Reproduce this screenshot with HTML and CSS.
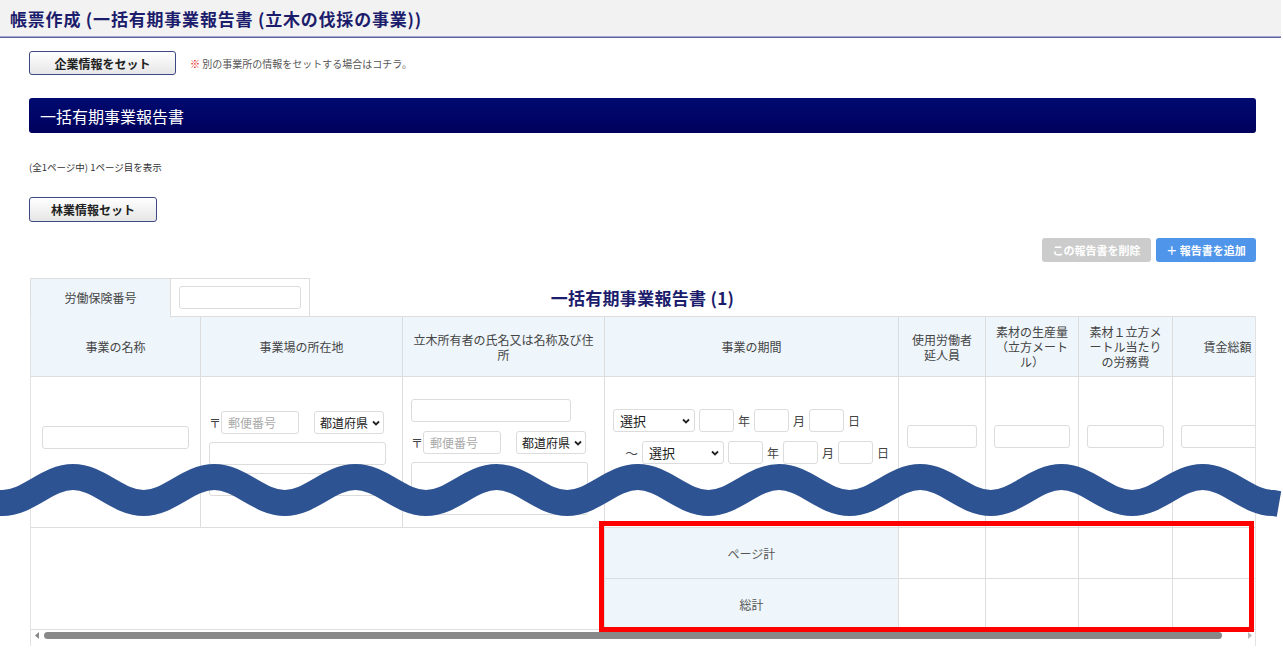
FILE: index.html
```html
<!DOCTYPE html>
<html lang="ja">
<head>
    <meta charset="UTF-8">
    <title>帳票作成 (一括有期事業報告書 (立木の伐採の事業))</title>
    <link rel="stylesheet" href="styles.css">
</head>
<body>
    <!-- Page heading -->
    <div class="page-head">
        <h1>帳票作成 (一括有期事業報告書 (立木の伐採の事業))</h1>
    </div>

    <div class="content">
        <!-- Company info -->
        <div class="company-row">
            <button class="btn-set btn-company">企業情報をセット</button>
            <span class="note"><span class="mark">※</span> 別の事業所の情報をセットする場合はコチラ。</span>
        </div>

        <div class="banner">一括有期事業報告書</div>

        <p class="page-info">(全1ページ中) 1ページ目を表示</p>

        <button class="btn-set btn-forest">林業情報セット</button>

        <div class="report-actions">
            <button class="btn-del">この報告書を削除</button>
            <button class="btn-add">＋ 報告書を追加</button>
        </div>

        <!-- Report title row -->
        <div class="report-top">
            <table class="insurance">
                <tr>
                    <th>労働保険番号</th>
                    <td><input type="text" class="input-box insurance-no"></td>
                </tr>
            </table>
            <h2 class="report-title">一括有期事業報告書 (1)</h2>
        </div>

        <!-- Main table -->
        <div class="scroll-box">
            <div class="scroll-inner">
                <table class="report">
                    <colgroup>
                        <col style="width: 170px">
                        <col style="width: 202px">
                        <col style="width: 202px">
                        <col style="width: 294px">
                        <col style="width: 87px">
                        <col style="width: 93px">
                        <col style="width: 94px">
                        <col style="width: 110px">
                    </colgroup>
                    <tr class="head-row">
                        <th>事業の名称</th>
                        <th>事業場の所在地</th>
                        <th>立木所有者の氏名又は名称及び住所</th>
                        <th>事業の期間</th>
                        <th>使用労働者延人員</th>
                        <th>素材の生産量（立方メートル）</th>
                        <th>素材１立方メートル当たりの労務費</th>
                        <th>賃金総額</th>
                    </tr>
                    <tr class="data-row">
                        <td class="c-name"><input type="text" class="input-box full"></td>
                        <td class="c-place">
                            <div class="zip-line">
                                <span class="zip-mark">〒</span>
                                <input type="text" class="input-box zip" placeholder="郵便番号">
                                <div class="select pref"><span>都道府県</span><svg width="8" height="6" viewBox="0 0 8 6"><path d="M1 1.5 L4 4.5 L7 1.5" fill="none" stroke="#222" stroke-width="1.8"/></svg></div>
                            </div>
                            <input type="text" class="input-box addr">
                            <input type="text" class="input-box addr">
                        </td>
                        <td class="c-owner">
                            <input type="text" class="input-box owner">
                            <div class="zip-line">
                                <span class="zip-mark">〒</span>
                                <input type="text" class="input-box zip" placeholder="郵便番号">
                                <div class="select pref"><span>都道府県</span><svg width="8" height="6" viewBox="0 0 8 6"><path d="M1 1.5 L4 4.5 L7 1.5" fill="none" stroke="#222" stroke-width="1.8"/></svg></div>
                            </div>
                            <input type="text" class="input-box addr tall">
                        </td>
                        <td class="c-period">
                            <div class="date-line">
                                <div class="select era"><span>選択</span><svg width="8" height="6" viewBox="0 0 8 6"><path d="M1 1.5 L4 4.5 L7 1.5" fill="none" stroke="#222" stroke-width="1.8"/></svg></div>
                                <input type="text" class="input-box num">
                                <span>年</span>
                                <input type="text" class="input-box num">
                                <span>月</span>
                                <input type="text" class="input-box num">
                                <span>日</span>
                            </div>
                            <div class="date-line to">
                                <span class="tilde">～</span>
                                <div class="select era"><span>選択</span><svg width="8" height="6" viewBox="0 0 8 6"><path d="M1 1.5 L4 4.5 L7 1.5" fill="none" stroke="#222" stroke-width="1.8"/></svg></div>
                                <input type="text" class="input-box num">
                                <span>年</span>
                                <input type="text" class="input-box num">
                                <span>月</span>
                                <input type="text" class="input-box num">
                                <span>日</span>
                            </div>
                        </td>
                        <td class="c-num"><input type="text" class="input-box full"></td>
                        <td class="c-num"><input type="text" class="input-box full"></td>
                        <td class="c-num"><input type="text" class="input-box full"></td>
                        <td class="c-num"><input type="text" class="input-box full"></td>
                    </tr>
                    <tr class="sum-row">
                        <td colspan="3" rowspan="2" class="blank"></td>
                        <th>ページ計</th>
                        <td></td><td></td><td></td><td></td>
                    </tr>
                    <tr class="sum-row">
                        <th>総計</th>
                        <td></td><td></td><td></td><td></td>
                    </tr>
                </table>
            </div>

            <!-- Horizontal scrollbar -->
            <div class="scrollbar">
                <svg width="5" height="7" viewBox="0 0 5 7"><path d="M4 0 L0 3.5 L4 7 Z" fill="#888"/></svg>
                <div class="thumb"></div>
                <svg class="arrow-r" width="5" height="7" viewBox="0 0 5 7"><path d="M1 0 L5 3.5 L1 7 Z" fill="#bbb"/></svg>
            </div>
        </div>
    </div>

    <!-- Omission wave -->
    <svg class="wave" width="1283" height="651" viewBox="0 0 1283 651">
        <path d="M -2 503 C 0 503, 1 503, 2.4 503 C 28.1 503, 47.3 477, 73 477 C 98.7 477, 117.9 503, 143.6 503 C 169.3 503, 188.5 477, 214.2 477 C 239.9 477, 259.1 503, 284.8 503 C 310.5 503, 329.7 477, 355.4 477 C 381.1 477, 400.3 503, 426 503 C 451.7 503, 470.9 477, 496.6 477 C 522.3 477, 541.5 503, 567.2 503 C 592.9 503, 612.1 477, 637.8 477 C 663.5 477, 682.7 503, 708.4 503 C 734.1 503, 753.3 477, 779 477 C 804.7 477, 823.9 503, 849.6 503 C 875.3 503, 894.5 477, 920.2 477 C 945.9 477, 965.1 503, 990.8 503 C 1016.5 503, 1035.7 477, 1061.4 477 C 1087.1 477, 1106.3 503, 1132 503 C 1157.7 503, 1176.9 477, 1202.6 477 C 1228.3 477, 1247.5 503, 1273.2 503 L 1279 504" fill="none" stroke="#2e5392" stroke-width="26"/>
    </svg>

    <!-- Highlight frame -->
    <div class="highlight"></div>
</body>
</html>
```

FILE: styles.css
```css
/* General */
* {
    margin: 0;
    padding: 0;
    box-sizing: border-box;
}

body {
    font-family: "Noto Sans CJK JP", "Noto Sans", sans-serif;
    color: #444;
    background: #fff;
    width: 1283px;
    height: 651px;
    overflow: hidden;
    position: relative;
}

button {
    font-family: inherit;
    cursor: pointer;
}

/* Page heading */
.page-head {
    height: 37px;
    margin-right: 2px;
    background: #f2f2f2;
    border-bottom: 1px solid #a4a7cf;
    box-shadow: 0 1px 0 #5f639f;
    padding-left: 10px;
    display: flex;
    align-items: center;
}

.page-head h1 {
    font-size: 17px;
    font-weight: bold;
    color: #1c1c6c;
    letter-spacing: 0.8px;
}

.content {
    padding: 0 27px 0 29px;
}

/* Buttons */
.btn-set {
    height: 24px;
    border: 1px solid #3f4785;
    border-radius: 3px;
    background: linear-gradient(#ffffff, #e6e6e6);
    font-size: 12px;
    font-weight: bold;
    color: #222;
}

.btn-company {
    width: 147px;
}

.btn-forest {
    width: 128px;
    height: 25px;
    display: block;
    margin-top: 24px;
}

.company-row {
    display: flex;
    align-items: center;
    margin-top: 14px;
}

.note {
    font-size: 10px;
    color: #555;
    margin-left: 14px;
}

.note .mark {
    color: #e60000;
    font-weight: bold;
}

/* Banner */
.banner {
    margin-top: 23px;
    height: 35px;
    border-radius: 3px;
    background: linear-gradient(#000a70, #00005c);
    color: #fff;
    font-size: 16px;
    padding-left: 11px;
    display: flex;
    align-items: center;
}

.page-info {
    margin-top: 28px;
    font-size: 9.5px;
    line-height: 12px;
    color: #333;
}

/* Add / delete */
.report-actions {
    display: flex;
    justify-content: flex-end;
    gap: 5px;
    margin-top: 16px;
}

.btn-del,
.btn-add {
    height: 24px;
    border: none;
    border-radius: 3px;
    color: #fff;
    font-size: 11px;
    font-weight: bold;
}

.btn-del {
    width: 109px;
    background: #cccccc;
}

.btn-add {
    width: 100px;
    background: #4f95ea;
}

/* Report heading */
.report-top {
    margin-top: 16px;
    display: grid;
    grid-template-columns: 1fr auto 1fr;
    align-items: center;
    height: 38px;
}

.insurance {
    justify-self: start;
    border-collapse: collapse;
    margin-left: 1px;
    table-layout: fixed;
    width: 280px;
}

.insurance th,
.insurance td {
    border: 1px solid #dddddd;
    border-bottom: none;
    height: 38px;
}

.insurance th {
    width: 140px;
    background: #eef5fb;
    font-size: 12px;
    font-weight: normal;
    color: #444;
}

.insurance td {
    padding: 0 8px;
}

.insurance-no {
    width: 122px;
}

.report-title {
    font-size: 17px;
    font-weight: bold;
    color: #1c1c6c;
    letter-spacing: 0.3px;
}

/* Inputs */
.input-box {
    display: block;
    height: 23px;
    border: 1px solid #dcdcdc;
    border-radius: 3px;
    background: #fff;
    font-family: inherit;
    font-size: 12px;
    padding: 0 6px;
}

.input-box::placeholder {
    color: #aaa;
}

.select {
    height: 23px;
    border: 1px solid #dcdcdc;
    border-radius: 3px;
    background: #fff;
    display: flex;
    align-items: center;
    justify-content: space-between;
    padding: 0 4px 0 6px;
    font-size: 13px;
    color: #222;
    white-space: nowrap;
}

/* Main table */
.scroll-box {
    margin-left: 1px;
    border-left: 1px solid #e2e2e2;
    border-right: 1px solid #e2e2e2;
    height: 330px;
}

.scroll-inner {
    overflow: hidden;
}

.report {
    border-collapse: collapse;
    table-layout: fixed;
    width: 1252px;
    margin-left: -1px;
}

.report th,
.report td {
    border: 1px solid #dddddd;
    font-size: 12px;
    line-height: 15px;
}

.report th {
    background: #eef5fb;
    font-weight: normal;
    color: #444;
    padding: 0 8px;
    text-align: center;
}

.head-row th {
    height: 60px;
}

.data-row td {
    height: 151px;
    padding: 0 8px;
    vertical-align: top;
}

.data-row .full {
    width: 100%;
}

.data-row .c-name {
    padding: 49px 11px 0;
}

.data-row .c-place {
    padding-top: 34px;
}

.data-row .c-owner {
    padding-top: 22px;
}

.data-row .c-period {
    padding-top: 32px;
}

.data-row .c-num {
    padding-top: 48px;
}

.sum-row th,
.sum-row td {
    height: 51px;
}

.sum-row th {
    color: #555;
}

.report .blank {
    border-left: none;
}

.zip-line {
    display: flex;
    align-items: center;
}

.zip-mark {
    width: 12px;
    font-size: 12px;
    color: #444;
}

.zip {
    width: 78px;
}

.pref {
    width: 70px;
    margin-left: 15px;
    font-size: 12px;
    padding: 0 3px 0 5px;
}

.addr {
    width: 177px;
    margin-top: 8px;
}

.tall {
    height: 53px;
}

.owner {
    width: 160px;
    margin-bottom: 9px;
}

.date-line {
    display: flex;
    align-items: center;
    gap: 4px;
    font-size: 12px;
    color: #444;
}

.date-line.to {
    margin-top: 9px;
    padding-left: 12px;
}

.tilde {
    font-size: 13px;
}

.era {
    width: 82px;
}

.num {
    width: 35px;
    padding: 0;
}

/* Scrollbar */
.scrollbar {
    height: 11px;
    display: flex;
    align-items: center;
    padding: 0 3px 0 4px;
}

.thumb {
    width: 1178px;
    height: 7px;
    margin-left: 4px;
    border-radius: 4px;
    background: #888;
}

.arrow-r {
    margin-left: auto;
}

/* Overlays */
.wave {
    position: absolute;
    left: 0;
    top: 0;
    pointer-events: none;
}

.highlight {
    position: absolute;
    left: 599px;
    top: 521px;
    width: 655px;
    height: 111px;
    border: 5px solid #ff0000;
    pointer-events: none;
}
```
